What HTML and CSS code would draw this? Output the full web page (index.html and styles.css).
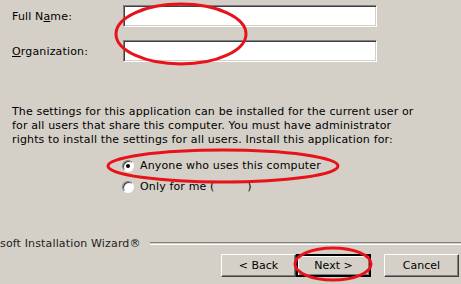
FILE: index.html
```html
<!DOCTYPE html>
<html lang="en">
<head>
  <meta charset="UTF-8">
  <title>Installation Wizard</title>
  <link rel="stylesheet" href="styles.css">
</head>
<body>
  <div class="wizard">
    <div class="fields">
      <label class="field-label" for="full-name">Full N<u>a</u>me:</label>
      <input class="field-input" id="full-name" type="text">
      <label class="field-label" for="org"><u>O</u>rganization:</label>
      <input class="field-input" id="org" type="text">
    </div>

    <p class="intro">The settings for this application can be installed for the current user or for all users that share this computer. You must have administrator rights to install the settings for all users. Install this application for:</p>

    <div class="choices">
      <label class="choice"><span class="radio checked"></span>Anyone who uses this computer</label>
      <label class="choice"><span class="radio"></span>Only for me (&nbsp;&nbsp;&nbsp;&nbsp;&nbsp;&nbsp;&nbsp;&nbsp;&nbsp;)</label>
    </div>

    <div class="brand">
      <span class="brand-name">soft Installation Wizard®</span>
      <span class="etched"></span>
    </div>

    <div class="buttons">
      <button class="btn">&lt; Back</button>
      <button class="btn default">Next &gt;</button>
      <button class="btn cancel">Cancel</button>
    </div>

    <!-- red pen marks drawn over the dialog -->
    <svg class="mark mark-fields" width="136" height="66" viewBox="0 0 136 66"><ellipse cx="68" cy="33" rx="65" ry="30"/></svg>
    <svg class="mark mark-radio" width="236" height="38" viewBox="0 0 236 38"><ellipse cx="118" cy="19" rx="115" ry="16"/></svg>
    <svg class="mark mark-next" width="82" height="38" viewBox="0 0 82 38"><ellipse cx="41" cy="19" rx="38" ry="16"/></svg>
  </div>
</body>
</html>
```

FILE: styles.css
```css
:root {
  --face: #d4d0c8;
  --shadow: #808080;
  --dark: #404040;
  --light: #fff;
  --text: #000;
  --pen: #e8121b;
}

body {
  margin: 0;
  background: var(--face);
  font-family: "DejaVu Sans", sans-serif;
  font-size: 11px;
  letter-spacing: 0.15px;
  color: var(--text);
  overflow: hidden;
}

.wizard {
  position: relative;
  width: 461px;
  height: 284px;
}

.fields {
  display: grid;
  grid-template-columns: 111px 254px;
  row-gap: 13px;
  align-items: center;
  padding: 5px 0 0 12px;
}

.field-input {
  box-sizing: border-box;
  height: 22px;
  margin: 0;
  background: #fff;
  border: 1px solid;
  border-color: var(--shadow) var(--light) var(--light) var(--shadow);
  box-shadow: inset 1px 1px 0 var(--dark), inset -1px -1px 0 var(--face);
  font: inherit;
}

.intro {
  margin: 43px 0 0 12px;
  width: 408px;
  line-height: 14px;
}

.choices {
  margin: 8px 0 0 122px;
  display: flex;
  flex-direction: column;
}

.choice {
  display: flex;
  align-items: center;
  gap: 6px;
  height: 21px;
}

.radio {
  box-sizing: border-box;
  width: 12px;
  height: 12px;
  border-radius: 50%;
  background: #fff;
  border: 1px solid;
  border-color: var(--shadow) var(--light) var(--light) var(--shadow);
  box-shadow: inset 1px 1px 0 var(--dark);
  display: flex;
  align-items: center;
  justify-content: center;
}

.radio.checked::after {
  content: "";
  width: 4px;
  height: 4px;
  border-radius: 50%;
  background: #000;
}

.brand {
  display: flex;
  align-items: center;
  gap: 9px;
  margin-top: 39px;
  height: 14px;
}

.brand-name {
  color: #222;
  white-space: nowrap;
}

.etched {
  flex: 1;
  height: 1px;
  border-top: 1px solid var(--shadow);
  border-bottom: 1px solid var(--light);
}

.buttons {
  display: flex;
  justify-content: flex-end;
  padding: 4px 2px 0 0;
}

.btn {
  box-sizing: border-box;
  width: 75px;
  height: 23px;
  margin: 0;
  background: var(--face);
  border: 1px solid;
  border-color: var(--light) var(--dark) var(--dark) var(--light);
  box-shadow: inset -1px -1px 0 var(--shadow);
  font: inherit;
  color: var(--text);
}

.btn.default {
  outline: 1px solid #000;
  outline-offset: -1px;
  border-width: 2px;
  border-color: #000;
  box-shadow: inset 1px 1px 0 var(--light), inset -1px -1px 0 var(--shadow);
}

.btn.cancel {
  margin-left: 13px;
}

.mark {
  position: absolute;
  fill: none;
  stroke: var(--pen);
  stroke-width: 3;
}

.mark-fields { left: 113px; top: 1px; }
.mark-radio { left: 105px; top: 147px; }
.mark-next { left: 292px; top: 245px; }
```
